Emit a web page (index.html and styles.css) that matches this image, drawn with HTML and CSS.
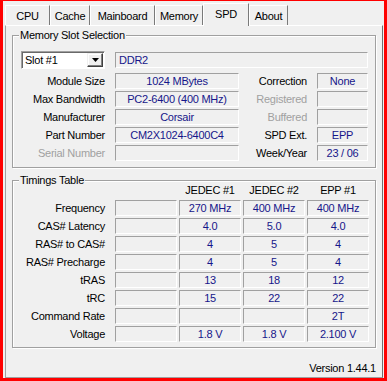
FILE: index.html
```html
<!DOCTYPE html>
<html>
<head>
    <title>CPU-Z SPD</title>
    <link rel="stylesheet" href="styles.css">
</head>
<body>
    <div class="window">
        <div class="tabs">
            <div class="tab tab-cpu">CPU</div>
            <div class="tab tab-cache">Cache</div>
            <div class="tab tab-mainboard">Mainboard</div>
            <div class="tab tab-memory">Memory</div>
            <div class="tab tab-spd active">SPD</div>
            <div class="tab tab-about">About</div>
        </div>

        <div class="panel">
            <div class="group slot-group">
                <span class="group-title">Memory Slot Selection</span>
                <div class="slot-grid">
                    <div class="combo">
                        <span class="combo-text">Slot #1</span>
                        <span class="combo-btn">
                            <svg width="7" height="4" viewBox="0 0 7 4"><polygon points="0,0 7,0 3.5,4" fill="#000"/></svg>
                        </span>
                    </div>
                    <div class="field field-type">DDR2</div>

                    <div class="label">Module Size</div>
                    <div class="field">1024 MBytes</div>
                    <div class="label">Correction</div>
                    <div class="field">None</div>

                    <div class="label">Max Bandwidth</div>
                    <div class="field">PC2-6400 (400 MHz)</div>
                    <div class="label disabled">Registered</div>
                    <div class="field"></div>

                    <div class="label">Manufacturer</div>
                    <div class="field">Corsair</div>
                    <div class="label disabled">Buffered</div>
                    <div class="field"></div>

                    <div class="label">Part Number</div>
                    <div class="field">CM2X1024-6400C4</div>
                    <div class="label">SPD Ext.</div>
                    <div class="field">EPP</div>

                    <div class="label disabled">Serial Number</div>
                    <div class="field"></div>
                    <div class="label">Week/Year</div>
                    <div class="field">23 / 06</div>
                </div>
            </div>

            <div class="group timings-group">
                <span class="group-title">Timings Table</span>
                <div class="timing-grid">
                    <div></div>
                    <div></div>
                    <div class="head">JEDEC #1</div>
                    <div class="head">JEDEC #2</div>
                    <div class="head">EPP #1</div>

                    <div class="label">Frequency</div>
                    <div class="field"></div>
                    <div class="field">270 MHz</div>
                    <div class="field">400 MHz</div>
                    <div class="field">400 MHz</div>

                    <div class="label">CAS# Latency</div>
                    <div class="field"></div>
                    <div class="field">4.0</div>
                    <div class="field">5.0</div>
                    <div class="field">4.0</div>

                    <div class="label">RAS# to CAS#</div>
                    <div class="field"></div>
                    <div class="field">4</div>
                    <div class="field">5</div>
                    <div class="field">4</div>

                    <div class="label">RAS# Precharge</div>
                    <div class="field"></div>
                    <div class="field">4</div>
                    <div class="field">5</div>
                    <div class="field">4</div>

                    <div class="label">tRAS</div>
                    <div class="field"></div>
                    <div class="field">13</div>
                    <div class="field">18</div>
                    <div class="field">12</div>

                    <div class="label">tRC</div>
                    <div class="field"></div>
                    <div class="field">15</div>
                    <div class="field">22</div>
                    <div class="field">22</div>

                    <div class="label">Command Rate</div>
                    <div class="field"></div>
                    <div class="field"></div>
                    <div class="field"></div>
                    <div class="field">2T</div>

                    <div class="label">Voltage</div>
                    <div class="field"></div>
                    <div class="field">1.8 V</div>
                    <div class="field">1.8 V</div>
                    <div class="field">2.100 V</div>
                </div>
            </div>

            <div class="version">Version 1.44.1</div>
        </div>
    </div>
</body>
</html>
```

FILE: styles.css
```css
body {
    margin: 0;
    background-color: #f00;
    font-family: "Liberation Sans", Arial, sans-serif;
    font-size: 11px;
    letter-spacing: -0.25px;
    color: #000;
}
.window {
    margin: 1px 3px 3px 3px;
    width: 381px;
    height: 377px;
    background-color: #f0f0f0;
}

/* tab strip */
.tabs {
    display: flex;
    align-items: flex-end;
    height: 24px;
    padding-left: 2px;
}
.tab {
    box-sizing: border-box;
    height: 20px;
    padding-top: 4px;
    line-height: 13px;
    text-align: center;
    white-space: nowrap;
    border-top: 1px solid #fff;
    border-left: 1px solid #fff;
    border-right: 1px solid #7a7a7a;
}
.tab-cpu { width: 45px; }
.tab-cache { width: 40px; }
.tab-mainboard { width: 65px; }
.tab-memory { width: 48px; }
.tab-spd { width: 46px; }
.tab-about { width: 39px; }
.tab.active {
    position: relative;
    z-index: 1;
    height: 23px;
    margin-bottom: -1px;
    background-color: #f0f0f0;
}

.panel {
    box-sizing: border-box;
    height: 353px;
    margin: 0 1px 0 2px;
    padding: 9px 6px 0 6px;
    border: 1px solid;
    border-color: #fff #707070 #a0a0a0 #a0a0a0;
}

/* group boxes */
.group {
    position: relative;
    box-sizing: border-box;
    border: 1px solid #a0a0a0;
    box-shadow: inset 1px 1px 0 #fff, 1px 1px 0 #fff;
}
.group-title {
    position: absolute;
    top: -7px;
    left: 6px;
    padding: 0 1px;
    line-height: 13px;
    background-color: #f0f0f0;
}
.slot-group {
    height: 133px;
    padding: 15px 7px 6px 8px;
}
.timings-group {
    height: 168px;
    margin-top: 12px;
    padding: 1px 7px 5px 8px;
}

.slot-grid {
    display: grid;
    grid-template-columns: 84px 124px 58px 51px;
    grid-template-rows: 20px repeat(5, 16px);
    column-gap: 10px;
    row-gap: 2px;
}
.timing-grid {
    display: grid;
    grid-template-columns: 92px repeat(4, 62px);
    grid-auto-rows: 16px;
    column-gap: 2px;
    row-gap: 2px;
}
.timing-grid .label {
    padding-right: 8px;
}

.label {
    line-height: 16px;
    text-align: right;
    white-space: nowrap;
}
.label.disabled {
    color: #a0a0a0;
}
.head {
    line-height: 16px;
    text-align: center;
    white-space: nowrap;
}
.field {
    box-sizing: border-box;
    height: 16px;
    border: 1px solid;
    border-color: #a0a0a0 #fff #fff #a0a0a0;
    line-height: 14px;
    text-align: center;
    white-space: nowrap;
    overflow: hidden;
    color: #16168a;
}
.field-type {
    grid-column: 2 / 5;
    margin-top: 1px;
    padding-left: 3px;
    text-align: left;
}

/* combo box */
.combo {
    box-sizing: border-box;
    display: flex;
    height: 18px;
    padding: 1px;
    background-color: #fff;
    border: 1px solid;
    border-color: #a0a0a0 #fff #fff #a0a0a0;
    box-shadow: inset 1px 1px 0 #696969;
}
.combo-text {
    flex: 1;
    padding-left: 2px;
    line-height: 14px;
}
.combo-btn {
    box-sizing: border-box;
    display: flex;
    align-items: center;
    justify-content: center;
    width: 16px;
    background-color: #f0f0f0;
    border: 1px solid;
    border-color: #f0f0f0 #404040 #404040 #f0f0f0;
    box-shadow: inset -1px -1px 0 #808080, inset 1px 1px 0 #fff;
}

.version {
    margin-top: 14px;
    line-height: 13px;
    text-align: right;
}
```
